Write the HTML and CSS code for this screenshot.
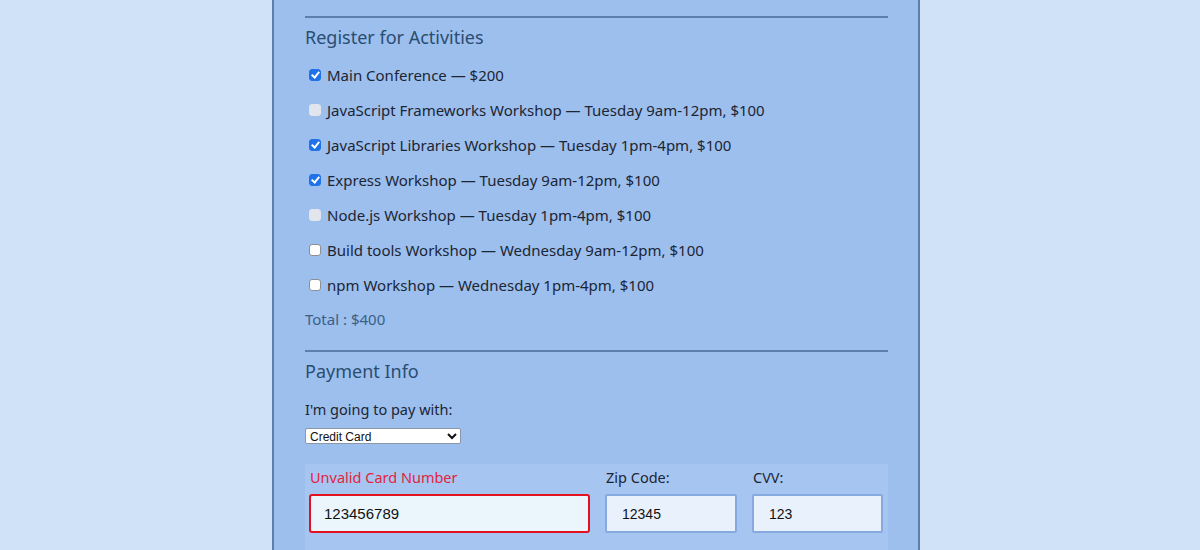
FILE: index.html
```html
<!DOCTYPE html>
<html lang="en">
<head>
<meta charset="utf-8">
<title>Register</title>
<link rel="stylesheet" href="styles.css">
</head>
<body>
<div class="container">
  <hr class="rule">
  <fieldset class="activities">
    <legend class="section-title">Register for Activities</legend>
    <label class="activity"><input type="checkbox" checked> Main Conference — $200</label>
    <label class="activity disabled"><input type="checkbox" disabled> JavaScript Frameworks Workshop — Tuesday 9am-12pm, $100</label>
    <label class="activity"><input type="checkbox" checked> JavaScript Libraries Workshop — Tuesday 1pm-4pm, $100</label>
    <label class="activity"><input type="checkbox" checked> Express Workshop — Tuesday 9am-12pm, $100</label>
    <label class="activity disabled"><input type="checkbox" disabled> Node.js Workshop — Tuesday 1pm-4pm, $100</label>
    <label class="activity"><input type="checkbox"> Build tools Workshop — Wednesday 9am-12pm, $100</label>
    <label class="activity"><input type="checkbox"> npm Workshop — Wednesday 1pm-4pm, $100</label>
    <p class="total">Total : $400</p>
  </fieldset>
  <hr class="rule">
  <fieldset class="payment">
    <legend class="section-title">Payment Info</legend>
    <label class="pay-label" for="payment">I'm going to pay with:</label>
    <select id="payment" class="pay-select">
      <option>Credit Card</option>
    </select>
    <div class="card-box">
      <div class="field field-cc">
        <label class="field-label error" for="cc">Unvalid Card Number</label>
        <input id="cc" class="field-input invalid" type="text" value="123456789">
      </div>
      <div class="field field-zip">
        <label class="field-label" for="zip">Zip Code:</label>
        <input id="zip" class="field-input" type="text" value="12345">
      </div>
      <div class="field field-cvv">
        <label class="field-label" for="cvv">CVV:</label>
        <input id="cvv" class="field-input" type="text" value="123">
      </div>
    </div>
  </fieldset>
</div>
</body>
</html>
```
FILE: styles.css
```css
html, body {
  margin: 0;
  padding: 0;
}
body {
  background: #cfe2f8;
  font-family: "Noto Sans", "Lato", sans-serif;
  padding-right: 8px;
  height: 550px;
  overflow: hidden;
}
.container {
  width: 583px;
  margin: 0 auto;
  background: #9cbfee;
  border-left: 2px solid #5a80ab;
  border-right: 2px solid #5a80ab;
  padding: 16px 30px 40px 31px;
  min-height: 600px;
}
.rule {
  margin: 0;
  border: 0;
  height: 2px;
  background: #5a80ab;
}
fieldset {
  border: 0;
  margin: 0;
  padding: 0;
  display: flex;
  flex-direction: column;
}
.section-title {
  padding: 0;
  float: left;
  width: 100%;
  font-size: 18px;
  color: #2a4d70;
  line-height: 22px;
  margin: 8px 0 0 0;
}
.activities .section-title {
  margin-bottom: 9px;
}
.activity {
  display: flex;
  align-items: center;
  height: 35px;
  font-size: 15px;
  color: #1c2533;
  padding-left: 4px;
  gap: 6px;
}
.activity input {
  appearance: none;
  -webkit-appearance: none;
  margin: 0;
  width: 12px;
  height: 12px;
  border-radius: 3px;
  background: #ffffff;
  border: 1px solid #8c8f94;
  box-sizing: border-box;
  position: relative;
  flex: none;
}
.activity input:checked {
  background: #1f72e8;
  border-color: #1f72e8;
}
.activity input:checked::after {
  content: "";
  position: absolute;
  left: 3px;
  top: 0px;
  width: 3px;
  height: 6px;
  border: solid #ffffff;
  border-width: 0 2px 2px 0;
  transform: rotate(40deg);
}
.activity input:disabled {
  background: #e2e6ec;
  border-color: #e2e6ec;
}
.total {
  margin: 0 0 13px 0;
  height: 35px;
  line-height: 35px;
  font-size: 15px;
  color: #3b5f85;
}
.payment .section-title {
  margin-top: 8px;
  margin-bottom: 17px;
}
.pay-label {
  font-size: 14.5px;
  color: #1c2533;
  line-height: 20px;
}
.pay-select {
  margin-top: 9px;
  width: 156px;
  height: 16px;
  font-family: "Liberation Sans", Arial, sans-serif;
  font-size: 12px;
  padding: 0;
  border: 1px solid #8a97a8;
  border-radius: 2px;
  background: #ffffff;
  color: #111;
}
.card-box {
  margin-top: 20px;
  background: #a6c6f1;
  display: flex;
  gap: 15px;
  padding: 4px 5px 20px 4px;
}
.field {
  display: flex;
  flex-direction: column;
  gap: 8px;
}
.field-cc { width: 281px; }
.field-zip { width: 132px; }
.field-cvv { width: 131px; }
.field-label {
  font-size: 14.5px;
  line-height: 18px;
  color: #1c2533;
  padding-left: 1px;
}
.field-label.error {
  color: #e3233f;
}
.field-input {
  height: 39px;
  box-sizing: border-box;
  width: 100%;
  border: 2px solid #86a9e0;
  border-radius: 2px;
  background: #e9f1fd;
  font-family: "Liberation Sans", Arial, sans-serif;
  font-size: 14px;
  color: #111;
  padding: 0 15px;
}
.field-input.invalid {
  border: 2px solid #e3111f;
  border-radius: 3px;
  background: #ebf5fc;
  font-size: 15px;
  padding: 0 13px;
}
```
